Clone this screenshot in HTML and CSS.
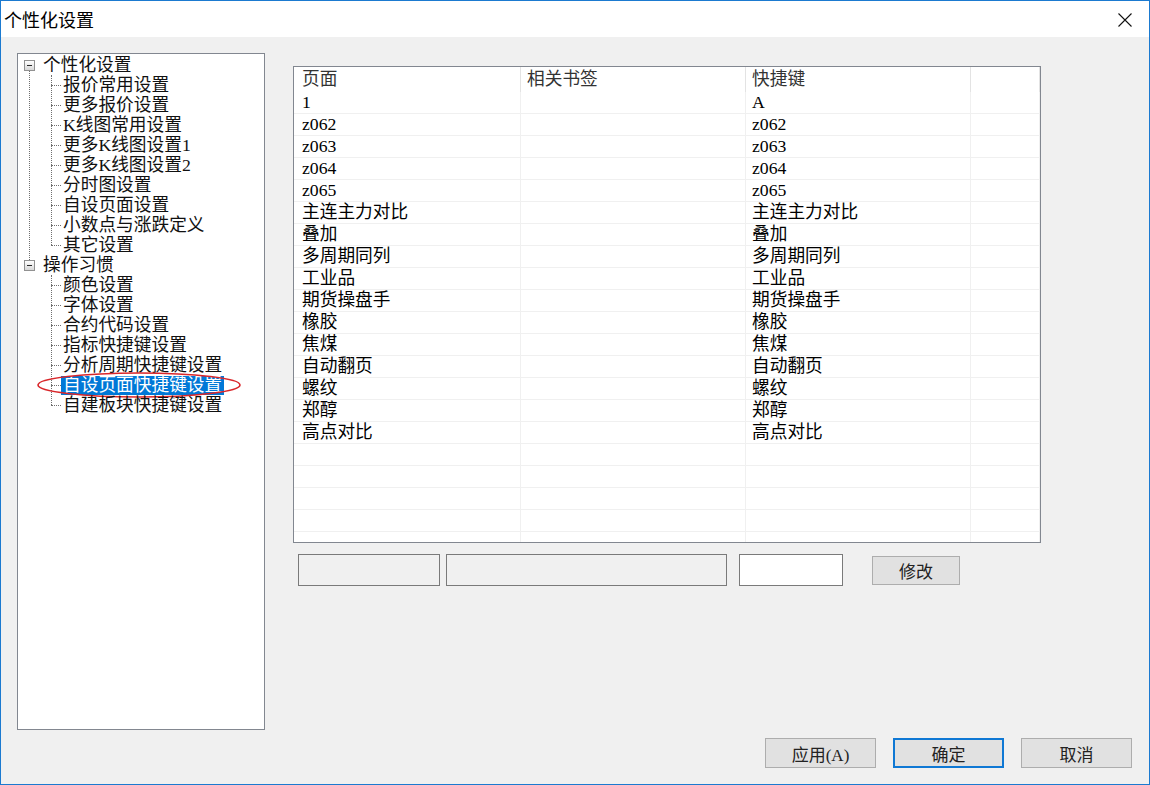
FILE: index.html
```html
<!DOCTYPE html>
<html lang="zh-CN">
<head>
  <meta charset="UTF-8" />
  <title>个性化设置</title>
  <link rel="stylesheet" href="styles.css">
</head>
<body>

  <div class="window">
    <!-- Title bar -->
    <div class="titlebar">
      <span class="title">个性化设置</span>
      <span class="close">
        <svg width="14" height="14" viewBox="0 0 14 14">
          <path d="M0.5 0.5 L13.5 13.5 M13.5 0.5 L0.5 13.5" stroke="#111" stroke-width="1.1" fill="none"/>
        </svg>
      </span>
    </div>

    <div class="content">
      <div class="main">

        <!-- Settings tree -->
        <div class="tree">
          <div class="group first">
            <div class="node root"><span class="toggle"></span><span class="label">个性化设置</span></div>
            <div class="children">
              <div class="node leaf">报价常用设置</div>
              <div class="node leaf">更多报价设置</div>
              <div class="node leaf">K线图常用设置</div>
              <div class="node leaf">更多K线图设置1</div>
              <div class="node leaf">更多K线图设置2</div>
              <div class="node leaf">分时图设置</div>
              <div class="node leaf">自设页面设置</div>
              <div class="node leaf">小数点与涨跌定义</div>
              <div class="node leaf">其它设置</div>
            </div>
          </div>
          <div class="group">
            <div class="node root"><span class="toggle"></span><span class="label">操作习惯</span></div>
            <div class="children">
              <div class="node leaf">颜色设置</div>
              <div class="node leaf">字体设置</div>
              <div class="node leaf">合约代码设置</div>
              <div class="node leaf">指标快捷键设置</div>
              <div class="node leaf">分析周期快捷键设置</div>
              <div class="node leaf current">
                <span class="sel">自设页面快捷键设置</span>
                <svg class="mark" width="206" height="28" viewBox="0 0 206 28">
                  <ellipse cx="103" cy="14" rx="101" ry="12" fill="none" stroke="#d9262a" stroke-width="1.6"/>
                </svg>
              </div>
              <div class="node leaf">自建板块快捷键设置</div>
            </div>
          </div>
        </div>

        <!-- Shortcut list -->
        <div class="right">
          <div class="list">
            <div class="row head">
              <div class="cell">页面</div>
              <div class="cell">相关书签</div>
              <div class="cell">快捷键</div>
              <div class="cell"></div>
            </div>
            <div class="row"><div class="cell">1</div><div class="cell"></div><div class="cell">A</div><div class="cell"></div></div>
            <div class="row"><div class="cell">z062</div><div class="cell"></div><div class="cell">z062</div><div class="cell"></div></div>
            <div class="row"><div class="cell">z063</div><div class="cell"></div><div class="cell">z063</div><div class="cell"></div></div>
            <div class="row"><div class="cell">z064</div><div class="cell"></div><div class="cell">z064</div><div class="cell"></div></div>
            <div class="row"><div class="cell">z065</div><div class="cell"></div><div class="cell">z065</div><div class="cell"></div></div>
            <div class="row"><div class="cell">主连主力对比</div><div class="cell"></div><div class="cell">主连主力对比</div><div class="cell"></div></div>
            <div class="row"><div class="cell">叠加</div><div class="cell"></div><div class="cell">叠加</div><div class="cell"></div></div>
            <div class="row"><div class="cell">多周期同列</div><div class="cell"></div><div class="cell">多周期同列</div><div class="cell"></div></div>
            <div class="row"><div class="cell">工业品</div><div class="cell"></div><div class="cell">工业品</div><div class="cell"></div></div>
            <div class="row"><div class="cell">期货操盘手</div><div class="cell"></div><div class="cell">期货操盘手</div><div class="cell"></div></div>
            <div class="row"><div class="cell">橡胶</div><div class="cell"></div><div class="cell">橡胶</div><div class="cell"></div></div>
            <div class="row"><div class="cell">焦煤</div><div class="cell"></div><div class="cell">焦煤</div><div class="cell"></div></div>
            <div class="row"><div class="cell">自动翻页</div><div class="cell"></div><div class="cell">自动翻页</div><div class="cell"></div></div>
            <div class="row"><div class="cell">螺纹</div><div class="cell"></div><div class="cell">螺纹</div><div class="cell"></div></div>
            <div class="row"><div class="cell">郑醇</div><div class="cell"></div><div class="cell">郑醇</div><div class="cell"></div></div>
            <div class="row"><div class="cell">高点对比</div><div class="cell"></div><div class="cell">高点对比</div><div class="cell"></div></div>
            <div class="row"><div class="cell"></div><div class="cell"></div><div class="cell"></div><div class="cell"></div></div>
            <div class="row"><div class="cell"></div><div class="cell"></div><div class="cell"></div><div class="cell"></div></div>
            <div class="row"><div class="cell"></div><div class="cell"></div><div class="cell"></div><div class="cell"></div></div>
            <div class="row"><div class="cell"></div><div class="cell"></div><div class="cell"></div><div class="cell"></div></div>
            <div class="row"><div class="cell"></div><div class="cell"></div><div class="cell"></div><div class="cell"></div></div>
          </div>

          <div class="edit-row">
            <div class="field page"></div>
            <div class="field bookmark"></div>
            <div class="field key"></div>
            <button class="btn modify">修改</button>
          </div>
        </div>
      </div>

      <!-- Dialog buttons -->
      <div class="footer">
        <button class="btn dlg">应用(A)</button>
        <button class="btn dlg default">确定</button>
        <button class="btn dlg">取消</button>
      </div>
    </div>
  </div>

</body>
</html>
```

FILE: styles.css
```css
* {
  margin: 0;
  padding: 0;
  box-sizing: border-box;
}

body {
  background: #fff;
  font-family: "Liberation Serif", "Noto Sans CJK SC", serif;
  font-size: 17.7px;
  color: #111;
}

.window {
  width: 1150px;
  height: 785px;
  border: 1px solid #1b7ad0;
  display: flex;
  flex-direction: column;
  overflow: hidden;
}

/* Title bar */
.titlebar {
  height: 36px;
  background: #fff;
  display: flex;
  align-items: center;
  justify-content: space-between;
  padding: 0 17px 0 3px;
}

.title {
  font-family: "Noto Sans CJK SC", sans-serif;
  font-size: 18px;
  color: #000;
}

.close {
  display: flex;
  margin-top: 2px;
}

/* Dialog body */
.content {
  flex: 1;
  background: #f0f0f0;
  padding: 16px 17px 0 16px;
  display: flex;
  flex-direction: column;
}

.main {
  display: flex;
  gap: 28px;
}

/* Tree */
.tree {
  width: 248px;
  height: 677px;
  background: #fff;
  border: 1px solid #828790;
  padding-top: 1px;
}

.group {
  position: relative;
}

.group.first::before {
  content: '';
  position: absolute;
  left: 11px;
  top: 15px;
  bottom: -5px;
  border-left: 1px dotted #6f6f6f;
}

.node {
  height: 20px;
  line-height: 20px;
  white-space: nowrap;
  position: relative;
}

.root {
  display: flex;
  align-items: center;
  padding-left: 6px;
}

.toggle {
  width: 11px;
  height: 11px;
  border: 1px solid #919191;
  background: linear-gradient(#ffffff, #d8d8d8);
  position: relative;
}

.toggle::after {
  content: '';
  position: absolute;
  left: 2px;
  right: 2px;
  top: 4px;
  height: 1px;
  background: #2a2a2a;
}

.root .label {
  margin-left: 8px;
}

.children {
  position: relative;
}

.children::before {
  content: '';
  position: absolute;
  left: 33px;
  top: 0;
  bottom: 10px;
  border-left: 1px dotted #6f6f6f;
}

.leaf {
  padding-left: 45px;
}

.leaf::before {
  content: '';
  position: absolute;
  left: 33px;
  top: 10px;
  width: 10px;
  border-top: 1px dotted #6f6f6f;
}

.sel {
  display: inline-block;
  background: #0078d7;
  color: #fff;
  line-height: 19px;
  padding: 0 2px;
  margin-left: -2px;
}

.mark {
  position: absolute;
  left: 18px;
  top: -4px;
}

/* List */
.right {
  padding-top: 13px;
}

.list {
  width: 748px;
  height: 477px;
  background: #fff;
  border: 1px solid #828790;
  overflow: hidden;
}

.row {
  display: grid;
  grid-template-columns: 227px 225px 225px 1fr;
  height: 22px;
  border-bottom: 1px solid #f0f0f0;
}

.cell {
  border-right: 1px solid #f0f0f0;
  padding-left: 6px;
  line-height: 21px;
  white-space: nowrap;
  color: #000;
}

.cell:first-child {
  padding-left: 8px;
}

.row.head {
  height: 25px;
  border-bottom: none;
}

.row.head .cell {
  border-right-color: #e3e3e3;
  line-height: 25px;
  color: #333;
}

.edit-row {
  display: flex;
  align-items: center;
  margin-top: 11px;
  padding-left: 5px;
}

.field {
  height: 32px;
  border: 1px solid #7a7a7a;
  background: #f0f0f0;
}

.field.page {
  width: 142px;
}

.field.bookmark {
  width: 281px;
  margin-left: 6px;
}

.field.key {
  width: 104px;
  margin-left: 12px;
  background: #fff;
}

.btn {
  font-family: "Liberation Serif", "Noto Sans CJK SC", serif;
  font-size: 17px;
  color: #222;
  background: #e1e1e1;
  border: 1px solid #adadad;
}

.btn.modify {
  width: 88px;
  height: 29px;
  margin-left: 29px;
}

/* Footer */
.footer {
  display: flex;
  justify-content: flex-end;
  gap: 17px;
  margin-top: 8px;
}

.btn.dlg {
  width: 111px;
  height: 30px;
}

.btn.default {
  border: 2px solid #0f78d4;
}
```
